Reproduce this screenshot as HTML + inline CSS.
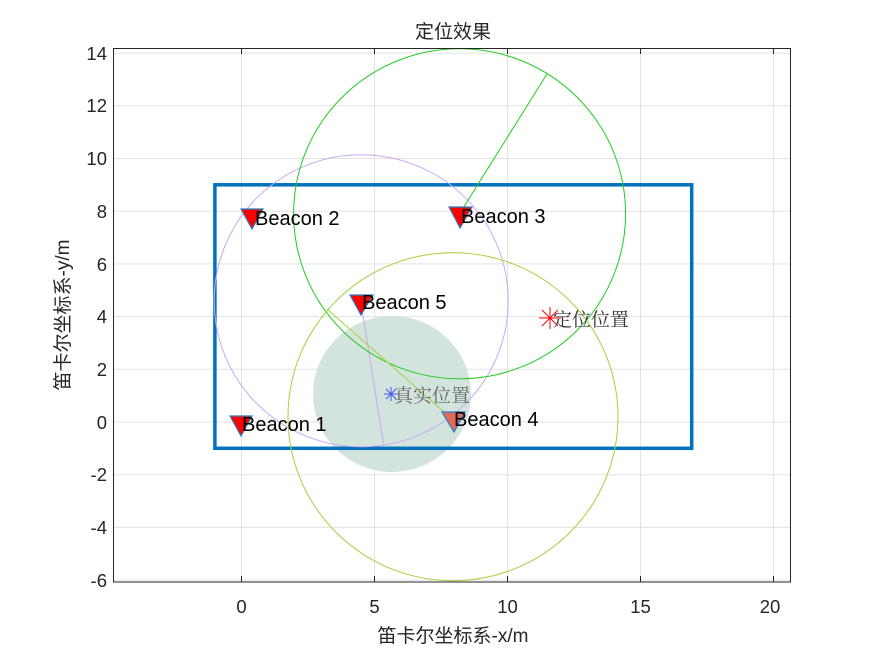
<!DOCTYPE html>
<html><head><meta charset="utf-8"><style>
html,body{margin:0;padding:0;background:#fff;}
svg{display:block;}
.t{font-family:"Liberation Sans",Arial,sans-serif;font-size:18.5px;fill:#262626;}
.b{font-family:"Liberation Sans",Arial,sans-serif;font-size:20px;fill:#000;}
.c{font-family:"Liberation Serif","Noto Serif CJK SC",serif;font-size:19px;}
.s{font-family:"Liberation Sans","Noto Sans CJK SC",sans-serif;font-size:19px;}
</style></head><body>
<svg width="875" height="656" viewBox="0 0 875 656" xmlns="http://www.w3.org/2000/svg">
<rect width="875" height="656" fill="#fff"/>
<g stroke="#e3e3e3" stroke-width="1">
<line x1="241.5" y1="48" x2="241.5" y2="582"/>
<line x1="374.5" y1="48" x2="374.5" y2="582"/>
<line x1="507.5" y1="48" x2="507.5" y2="582"/>
<line x1="640.5" y1="48" x2="640.5" y2="582"/>
<line x1="773.5" y1="48" x2="773.5" y2="582"/>
<line x1="114" y1="53.1" x2="791" y2="53.1"/>
<line x1="114" y1="105.8" x2="791" y2="105.8"/>
<line x1="114" y1="158.5" x2="791" y2="158.5"/>
<line x1="114" y1="211.2" x2="791" y2="211.2"/>
<line x1="114" y1="263.9" x2="791" y2="263.9"/>
<line x1="114" y1="316.6" x2="791" y2="316.6"/>
<line x1="114" y1="369.3" x2="791" y2="369.3"/>
<line x1="114" y1="422" x2="791" y2="422"/>
<line x1="114" y1="474.7" x2="791" y2="474.7"/>
<line x1="114" y1="527.4" x2="791" y2="527.4"/>
<line x1="114" y1="580.1" x2="791" y2="580.1"/>
</g>
<ellipse cx="392" cy="394" rx="79" ry="78" fill="#d3e4dc"/>
<rect x="214.9" y="184.8" width="476.8" height="263.5" fill="none" stroke="#0072BD" stroke-width="3.5"/>
<ellipse cx="361.2" cy="300.8" rx="147" ry="146" fill="none" stroke="#c9a8f5" stroke-width="1"/>
<line x1="361" y1="303" x2="384" y2="447" stroke="#c9a8f5" stroke-width="1"/>
<ellipse cx="459.6" cy="213.8" rx="166" ry="165" fill="none" stroke="#22cc22" stroke-width="1"/>
<line x1="460" y1="213" x2="547" y2="74" stroke="#22cc22" stroke-width="1"/>
<ellipse cx="453" cy="416.7" rx="165" ry="164" fill="none" stroke="#a6d13e" stroke-width="1"/>
<line x1="327" y1="309" x2="452" y2="419" stroke="#a6d13e" stroke-width="1"/>
<g fill="#ff0000" stroke="#2a7fc0" stroke-width="1.2">
<polygon points="230,416 252,416 241,436"/>
<polygon points="241,209 263,209 252,229"/>
<polygon points="449,207 472,207 460,228"/>
<polygon points="350,295 373,295 361,315"/>
<polygon points="442,412 465,412 454,432" fill="#e26a5a"/>
</g>
<text class="b" x="242" y="431">Beacon 1</text>
<text class="b" x="255" y="225">Beacon 2</text>
<text class="b" x="461" y="223">Beacon 3</text>
<text class="b" x="454" y="426">Beacon 4</text>
<text class="b" x="362" y="309">Beacon 5</text>
<g stroke="#ff0000" stroke-width="1"><line x1="550" y1="307" x2="550" y2="329"/><line x1="539" y1="318" x2="561" y2="318"/><line x1="542" y1="310" x2="558" y2="326"/><line x1="542" y1="326" x2="558" y2="310"/></g>
<text class="c" x="553" y="326" fill="#333">定位位置</text>
<g stroke="#4455ee" stroke-width="1"><line x1="391" y1="387" x2="391" y2="401"/><line x1="384" y1="394" x2="398" y2="394"/><line x1="386" y1="389" x2="396" y2="399"/><line x1="386" y1="399" x2="396" y2="389"/></g>
<text class="c" x="394" y="402" fill="#666">真实位置</text>
<rect x="113.5" y="48.5" width="677" height="533.5" fill="none" stroke="#262626" stroke-width="1"/>
<g stroke="#262626" stroke-width="1">
<line x1="241.5" y1="582" x2="241.5" y2="576"/><line x1="374.5" y1="582" x2="374.5" y2="576"/><line x1="507.5" y1="582" x2="507.5" y2="576"/><line x1="640.5" y1="582" x2="640.5" y2="576"/><line x1="773.5" y1="582" x2="773.5" y2="576"/>
<line x1="241.5" y1="48" x2="241.5" y2="54"/><line x1="374.5" y1="48" x2="374.5" y2="54"/><line x1="507.5" y1="48" x2="507.5" y2="54"/><line x1="640.5" y1="48" x2="640.5" y2="54"/><line x1="773.5" y1="48" x2="773.5" y2="54"/>
</g>
<g class="t" text-anchor="middle">
<text x="241.5" y="613">0</text><text x="374.5" y="613">5</text><text x="507.5" y="613">10</text><text x="640.5" y="613">15</text><text x="770" y="613">20</text>
</g>
<g class="t" text-anchor="end">
<text x="107" y="60">14</text><text x="107" y="112">12</text><text x="107" y="165">10</text><text x="107" y="218">8</text><text x="107" y="271">6</text><text x="107" y="323">4</text><text x="107" y="376">2</text><text x="107" y="429">0</text><text x="107" y="481">-2</text><text x="107" y="534">-4</text><text x="107" y="587">-6</text>
</g>
<text x="453" y="38" text-anchor="middle" class="s" fill="#262626">定位效果</text>
<text x="453" y="642" text-anchor="middle" class="s" fill="#262626">笛卡尔坐标系-x/m</text>
<text transform="translate(69,315) rotate(-90)" text-anchor="middle" class="s" fill="#262626">笛卡尔坐标系-y/m</text>
</svg>
</body></html>
